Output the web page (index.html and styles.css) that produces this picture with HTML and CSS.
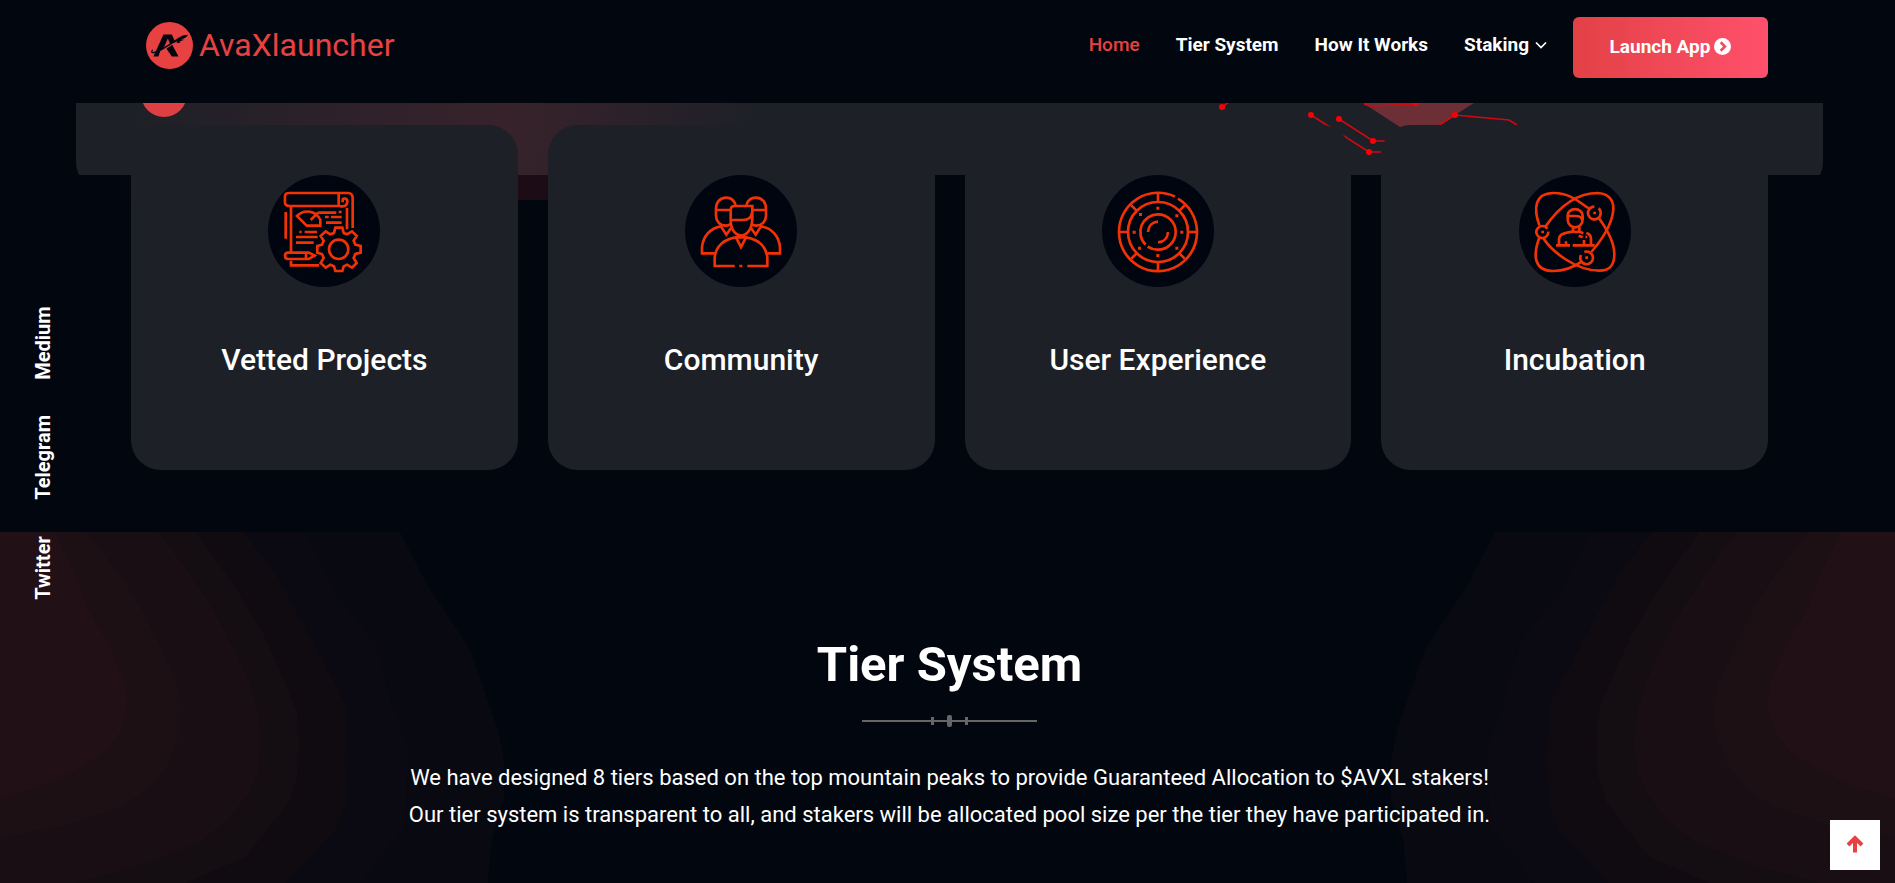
FILE: index.html
```html
<!DOCTYPE html>
<html lang="en">
<head>
<meta charset="utf-8">
<meta name="viewport" content="width=device-width, initial-scale=1">
<title>AvaXlauncher</title>
<link rel="stylesheet" href="styles.css">
</head>
<body>
<header class="header">
  <a class="logo" href="#home">
    <svg class="logo-mark" viewBox="257 66 140 140" aria-hidden="true">
      <circle cx="327" cy="136" r="70" fill="#e84142"/>
      <path d="M279 169 309 103h25l9 20-14 8-7-16-13 30-9 6-6 18zM318 146l17-12 19 35h-20z" fill="#02070f"/>
      <path d="M277 149c-8 9 2 11 16 4 20-9 34-21 52-30" fill="none" stroke="#02070f" stroke-width="4"/>
      <path d="M342 120c12-10 26-16 40-16-3 8-12 12-21 14l10 1-14 5 3 3-12 2 3-6-14 6z" fill="#02070f"/>
      <path d="M344 118l17-9" stroke="#e84142" stroke-width="2"/>
    </svg>
    <span>AvaXlauncher</span>
  </a>
  <nav class="nav">
    <a class="nav-link active" href="#home">Home</a>
    <a class="nav-link" href="#tiers">Tier System</a>
    <a class="nav-link" href="#how">How It Works</a>
    <a class="nav-link" href="#staking">Staking
      <svg class="chevron" viewBox="0 0 12 8" aria-hidden="true"><path d="M1 1.5l5 5 5-5" fill="none" stroke="currentColor" stroke-width="1.7"/></svg>
    </a>
    <a class="launch" href="#app">Launch App
      <svg class="launch-icon" viewBox="0 0 16 16" aria-hidden="true"><circle cx="8" cy="8" r="8" fill="#fff"/><path d="M6.3 4l4 4-4 4" fill="none" stroke="#f24a5a" stroke-width="2.4"/></svg>
    </a>
  </nav>
</header>

<main>
  <section class="hero" id="home">
    <div class="hero-clip"><div class="hero-panel"></div></div>
    <div class="hero-glow"></div>
    <svg class="hero-badge" viewBox="0 0 46 14" aria-hidden="true"><circle cx="23" cy="-9" r="23" fill="#dd4043"/></svg>
    <svg class="hero-circuit" viewBox="1195 103 340 72" aria-hidden="true">
      <path d="M1363 103 1400 127h36l38-24z" fill="#6c2f35"/>
      <g fill="none" stroke="#cf0a10" stroke-width="1.6">
        <path d="M1222 107l7-5M1311 115l58 37h12M1339 119l34 22h12M1438 126l17-11 54 5 8 5M1364 104l6 2 46-2"/>
      </g>
      <g fill="#f80006"><circle cx="1222" cy="107" r="3"/><circle cx="1311" cy="115" r="3"/><circle cx="1339" cy="119" r="3"/><circle cx="1373" cy="141" r="3"/><circle cx="1369" cy="152" r="3"/><circle cx="1455" cy="115" r="3"/><circle cx="1416" cy="103" r="3"/></g>
    </svg>
  </section>

  <section class="features">
    <article class="card">
      <svg class="card-icon" viewBox="54 30 336 336" aria-hidden="true">
        <g class="line">
          <path d="M266 123H118c-16 0-13-12-13-20s-3-19 13-19h176c12 0 14 8 14 16v89M266 87v31q0 6 6 6h6c12 0 14-9 14-16s-14-11-14-3v7M291 129v64M107 141v80M123 126v136M123 287v14h84"/>
          <path d="M205 143h54M266 141h9"/>
          <path d="M141 153c22-22 58-16 70 12v17h-41zM182 165l23-23"/>
          <path d="M225 156h11M243 156h32M228 173h47M148 201h7M164 201h37M138 216h65M138 233h53"/>
          <path d="M114 263h62l18 9-18 10h-62c-12 0-12-19 0-19zM168 264v17"/>
          <path d="M256 188h21l4 16 10 4 15-9 14 14-9 14 5 12 16 4v20l-16 4-5 12 9 15-14 14-15-9-10 5-4 14h-21l-4-14-11-5-14 9-15-14 9-15-5-12-14-4v-20l14-4 5-12-9-14 15-14 14 9 11-4z"/>
          <circle cx="266" cy="253" r="29"/>
        </g>
      </svg>
      <h3>Vetted Projects</h3>
    </article>
    <article class="card">
      <svg class="card-icon" viewBox="45 30 336 336" aria-hidden="true">
        <g class="line">
          <path d="M197 120c-5-14-16-22-28-22-20 0-31 15-31 34v20c0 16 11 29 29 30 7 0 11-2 16-6M138 135h42"/>
          <path d="M229 120c5-14 16-22 28-22 20 0 31 15 31 34v20c0 16-11 29-29 30-7 0-11-2-16-6M288 135h-38"/>
          <path d="M182 135q0-12 12-12h53v35c0 70-65 70-65 7zM182 165h36c17 0 27-6 28-23"/>
          <path d="M134 265H96v-18c3-32 24-58 57-63l16 25 14-20M292 265h38v-18c-3-32-24-58-57-63l-16 25-14-20"/>
          <path d="M194 303h-60v-25c3-34 28-56 64-61l15 29 15-29c36 5 61 27 64 61v25h-60M198 217h30M208 303h9"/>
        </g>
      </svg>
      <h3>Community</h3>
    </article>
    <article class="card">
      <svg class="card-icon" viewBox="51 30 336 336" aria-hidden="true">
        <g class="line">
          <path d="M270 95A117 117 0 0 0 102 201A117 117 0 1 0 279 101"/>
          <circle cx="219" cy="201" r="90"/>
          <path d="M182 239A53 53 0 0 1 219 148A53 53 0 0 1 219 254A53 53 0 0 1 188 245M189 201c1-18 13-30 30-31M249 201c-1 18-13 30-30 31"/>
          <path d="M219 84v26M219 292v26M102 201h26M310 201h27M139 121l15 15M299 121l-15 15M139 281l15-15M299 281l-15-15"/>
        </g>
        <path class="dots" d="M214 125h9v9h-9zM214 267h9v9h-9zM143 197h9v9h-9zM286 197h9v9h-9zM162 144h9v9h-9zM271 148h9v9h-9zM159 245h9v9h-9zM271 245h9v9h-9z"/>
      </svg>
      <h3>User Experience</h3>
    </article>
    <article class="card">
      <svg class="card-icon" viewBox="57 30 336 336" aria-hidden="true">
        <g class="line">
          <path d="M118 181C100 130 104 85 160 84c54-1 87 36 108 47"/>
          <path d="M297 160c36 50 46 82 46 107 0 32-12 50-45 50-70 0-142-57-168-97"/>
          <path d="M137 184c40-58 90-100 157-100 75 6 51 94-20 177"/>
          <path d="M245 290c-20 14-52 28-85 28-62 0-60-52-42-100"/>
          <path d="M142 191a18 18 0 1 0 3 9M296 130A19 19 0 1 1 283 125M243 270a19 19 0 1 0 10-9"/>
          <path d="M203 155c-2-30 46-30 45 0v8c0 32-45 32-45 0zM204 153h22c13 0 20 5 21 14M219 186v11c3 6 16 6 19 0v-11"/>
          <path d="M168 241h42M218 241h66M177 238v-16c1-15 15-18 42-22M238 200l12 5M259 204c12 3 14 9 14 18v16M198 229v11M252 225v15M236 212l12 5M256 216h5"/>
        </g>
        <path class="dots" d="M124 197h8v8h-8zM280 140h8v8h-8zM256 274h8v8h-8z"/>
      </svg>
      <h3>Incubation</h3>
    </article>
  </section>

  <section class="tiers" id="tiers">
    <svg class="bands bands-left" viewBox="0 0 505 351" aria-hidden="true">
      <g id="bands">
        <path fill="#080911" d="M0 0H400L428 54 470 117 498 198 504 228V268L492 308 488 351H0z"/>
        <path fill="#0b0a12" d="M0 0H304L336 63 375 109 393 175 409 217 405 294 361 351H0z"/>
        <path fill="#100b10" d="M0 0H243L275 40 296 79 320 124 345 171 348 229 345 275 336 298 286 351H0z"/>
        <path fill="#140d12" d="M0 0H196L236 56 264 103 286 152 297 180 299 212 297 245 289 270 246 325 186 351H0z"/>
        <path fill="#180e13" d="M0 0H159L190 42 214 79 235 118 250 152 259 185 261 212 258 240 248 262 228 288 200 310 145 332 75 351H0z"/>
        <path fill="#1c1014" d="M0 0H86L118 40 143 79 162 118 177 152 181 172 180 200 168 233 148 257 121 275 70 292 0 306z"/>
        <path fill="#211016" d="M0 0H54L74 40 89 79 110 115 125 152 128 172 120 200 105 220 80 236 45 253 0 267z"/>
      </g>
    </svg>
    <svg class="bands bands-right" viewBox="0 0 505 351" aria-hidden="true"><use href="#bands"/></svg>
    <div class="tiers-content">
      <h2>Tier System</h2>
      <div class="divider"><i></i><i></i><i></i></div>
      <p>We have designed 8 tiers based on the top mountain peaks to provide Guaranteed Allocation to $AVXL stakers!<br>Our tier system is transparent to all, and stakers will be allocated pool size per the tier they have participated in.</p>
    </div>
  </section>
</main>

<aside class="social">
  <a href="#twitter">Twitter</a>
  <a href="#telegram">Telegram</a>
  <a href="#medium">Medium</a>
</aside>

<button class="to-top" type="button" aria-label="Back to top">
  <svg viewBox="0 0 18 18" aria-hidden="true"><path d="M9 17.500V3M2 10l7-7 7 7" fill="none" stroke="#e84142" stroke-width="4"/></svg>
</button>
</body>
</html>
```
FILE: styles.css
```css
* { box-sizing: border-box; }

body {
  margin: 0;
  min-height: 100vh;
  display: flex;
  flex-direction: column;
  overflow: hidden;
  background: #02070f;
  color: #fff;
  font-family: Roboto, "Liberation Sans", sans-serif;
}

a { color: inherit; text-decoration: none; }

h2, h3, p { margin: 0; }

main {
  flex: 1;
  display: flex;
  flex-direction: column;
}

.header {
  display: flex;
  justify-content: space-between;
  align-items: center;
  height: 103px;
  padding: 0 127px 8px 146px;
}

.logo {
  display: flex;
  align-items: center;
  gap: 6px;
  margin-bottom: 5px;
  color: #e84142;
  font-size: 32px;
  line-height: 46px;
}

.logo-mark { width: 47px; height: 47px; }

.nav {
  display: flex;
  align-items: center;
  gap: 36px;
}

.nav-link {
  display: flex;
  align-items: center;
  gap: 6px;
  margin-bottom: 6px;
  font-size: 19px;
  font-weight: 700;
  line-height: 30px;
}

.active { color: #e84142; font-weight: 500; }

.chevron { width: 12px; height: 8px; }

.launch {
  display: flex;
  align-items: center;
  justify-content: center;
  gap: 4px;
  width: 195px;
  height: 61px;
  margin-left: -10px;
  padding-bottom: 2px;
  border-radius: 6px;
  background: linear-gradient(90deg, #e24145, #ff506c);
  font-size: 19px;
  font-weight: 700;
}

.launch-icon { width: 17px; height: 17px; }

.hero {
  position: relative;
  height: 72px;
}

.hero-clip {
  height: 72px;
  padding: 0 72px 0 76px;
  overflow: hidden;
}

.hero-panel {
  height: 89px;
  border-radius: 0 0 30px 30px;
  background: #1d2027;
}

.hero-glow {
  position: absolute;
  top: 0;
  left: 120px;
  width: 630px;
  height: 97px;
  background: linear-gradient(100deg, rgba(233, 50, 70, 0), rgba(233, 50, 70, .07) 30%, rgba(233, 50, 70, .13) 60%, rgba(233, 50, 70, .1) 70%, rgba(233, 50, 70, 0));
}

.hero-badge {
  position: absolute;
  top: 0;
  left: 141px;
  width: 46px;
  height: 14px;
}

.hero-circuit {
  position: absolute;
  top: 0;
  right: 360px;
  width: 340px;
  height: 72px;
}

.features {
  position: relative;
  display: grid;
  grid-template-columns: repeat(4, 1fr);
  gap: 30px;
  margin: -50px 127px 62px 131px;
}

.card {
  display: flex;
  flex-direction: column;
  align-items: center;
  gap: 53px;
  height: 345px;
  padding: 50px 20px;
  border-radius: 30px;
  background: #1d2027;
}

.card-icon {
  width: 112px;
  height: 112px;
  border-radius: 50%;
  background: #000510;
}

.line {
  fill: none;
  stroke: #f23205;
  stroke-width: 8;
}

.dots { fill: #f23205; }

.card h3 {
  font-size: 30px;
  font-weight: 500;
  line-height: 40px;
}

.tiers {
  position: relative;
  flex: 1;
  min-height: 351px;
}

.bands {
  position: absolute;
  top: 0;
  width: 505px;
  height: 351px;
}

.bands-left { left: 0; }

.bands-right { right: 0; transform: scaleX(-1); }

.tiers-content {
  position: relative;
  display: flex;
  flex-direction: column;
  align-items: center;
  padding: 103px 0 0 4px;
  text-align: center;
}

.tiers h2 {
  font-size: 49px;
  font-weight: 700;
  line-height: 60px;
}

.divider {
  display: flex;
  align-items: center;
  justify-content: center;
  gap: 13px;
  width: 175px;
  height: 12px;
  margin: 20px 0 32px;
  background: linear-gradient(#666, #666) center / 100% 2px no-repeat;
}

.divider i { width: 3px; height: 8px; background: #666; }

.divider i:nth-child(2) { width: 5px; height: 12px; border-radius: 2px; }

.tiers p {
  font-size: 22px;
  line-height: 37px;
}

.social {
  position: absolute;
  top: 306px;
  left: 31px;
  display: flex;
  gap: 36px;
  writing-mode: vertical-rl;
  transform: rotate(180deg);
  font-size: 20px;
  font-weight: 700;
  line-height: 24px;
}

.to-top {
  position: fixed;
  right: 15px;
  bottom: 13px;
  display: grid;
  place-items: center;
  width: 50px;
  height: 50px;
  padding: 0 0 3px;
  border: 0;
  background: #fff;
}

.to-top svg { width: 18px; height: 18px; }
```
